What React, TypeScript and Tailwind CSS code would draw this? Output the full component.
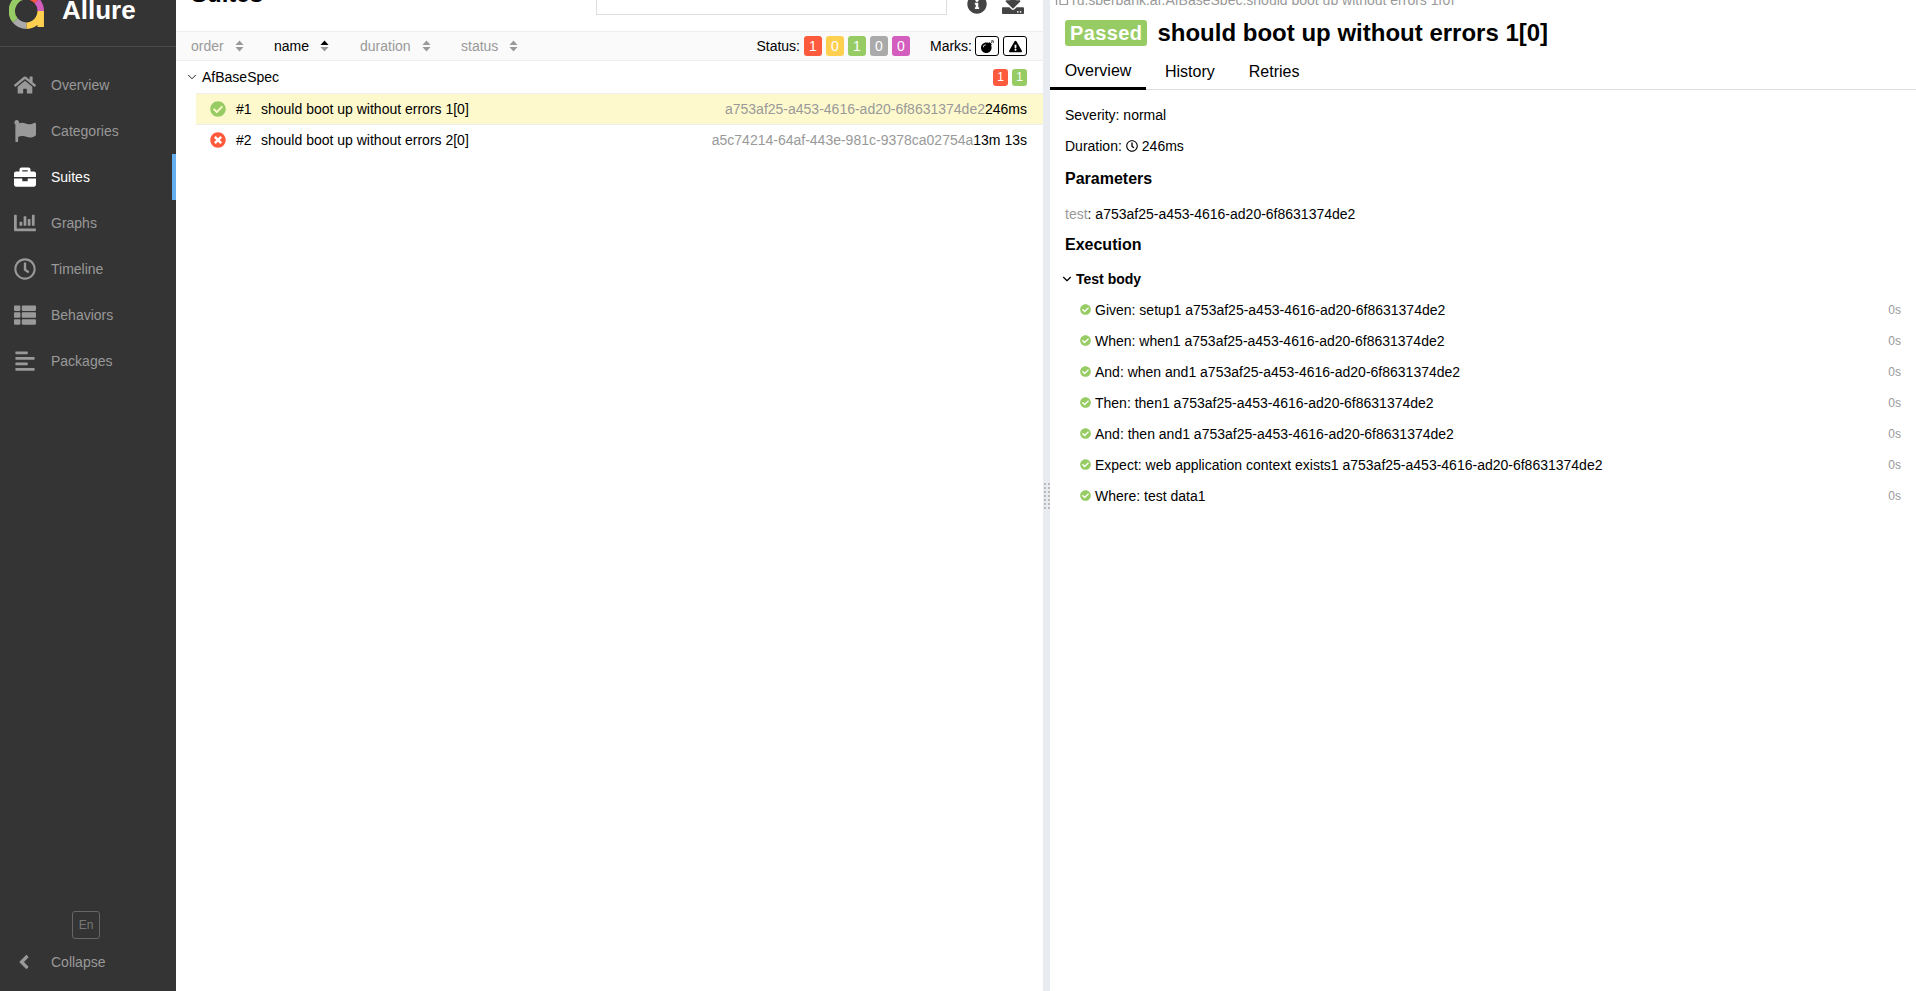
import {
  FaAlignLeft,
  FaAngleLeft,
  FaBomb,
  FaBriefcase,
  FaChartBar,
  FaCheckCircle,
  FaDownload,
  FaExclamationTriangle,
  FaFlag,
  FaHome,
  FaInfoCircle,
  FaRegClock,
  FaRegCopy,
  FaThList,
  FaTimesCircle,
} from "react-icons/fa";
import { ChevronDown } from "lucide-react";

const uid = "a753af25-a453-4616-ad20-6f8631374de2";

const navItems = [
  { label: "Overview", icon: FaHome },
  { label: "Categories", icon: FaFlag },
  { label: "Suites", icon: FaBriefcase, active: true },
  { label: "Graphs", icon: FaChartBar },
  { label: "Timeline", icon: FaRegClock },
  { label: "Behaviors", icon: FaThList },
  { label: "Packages", icon: FaAlignLeft },
];

const columns = [
  { label: "order", width: "w-[83px]" },
  { label: "name", width: "w-[86px]", active: true },
  { label: "duration", width: "w-[101px]" },
  { label: "status", width: "w-[70px]" },
];

const statusCounts = [
  { value: 1, color: "bg-[#fd5a3e]" },
  { value: 0, color: "bg-[#ffd050]" },
  { value: 1, color: "bg-[#97cc64]" },
  { value: 0, color: "bg-[#aaaaaa]" },
  { value: 0, color: "bg-[#d35ebe]" },
];

const steps = [
  `Given: setup1 ${uid}`,
  `When: when1 ${uid}`,
  `And: when and1 ${uid}`,
  `Then: then1 ${uid}`,
  `And: then and1 ${uid}`,
  `Expect: web application context exists1 ${uid}`,
  "Where: test data1",
];

function Logo() {
  return (
    <svg width="36" height="36" viewBox="0 0 36 36" className="mt-[-7px] ml-[9px] shrink-0">
      <g fill="none" strokeWidth="6.5">
        <path d="M17.5 3.3 A14.7 14.7 0 0 0 6.2 27.4" stroke="#97cc64" />
        <path d="M6.2 27.4 A14.7 14.7 0 0 0 17.5 32.7" stroke="#aaaaaa" />
        <path d="M17.5 32.7 A14.7 14.7 0 0 0 31.7 18 L31.7 34" stroke="#ffd050" />
        <path d="M31.7 18 A14.7 14.7 0 0 0 27.8 7.8" stroke="#d35ebe" />
        <path d="M27.8 7.8 A14.7 14.7 0 0 0 17.5 3.3" stroke="#fd5a3e" />
      </g>
    </svg>
  );
}

function SortIcon({ active }: { active?: boolean }) {
  return (
    <svg width="9" height="12" viewBox="0 0 9 12" className="ml-[11px] shrink-0">
      <path d="M4.5 0.5 L8.5 5 H0.5 Z" fill={active ? "#000000" : "#999999"} />
      <path d="M0.5 7 H8.5 L4.5 11.5 Z" fill="#999999" />
    </svg>
  );
}

function Sidebar() {
  return (
    <aside className="flex h-full w-[176px] shrink-0 flex-col bg-[#343434]">
      <div className="flex h-[47px] shrink-0 items-start overflow-hidden border-b border-[#4a4a4a]">
        <Logo />
        <span className="ml-[17px] mt-[-5px] text-[26px] font-bold leading-[30px] text-white">Allure</span>
      </div>
      <nav className="flex flex-col pt-[15px]">
        {navItems.map((item) => {
          const Icon = item.icon;
          return (
            <div
              key={item.label}
              className={`flex h-[46px] items-center border-r-4 pl-[14px] ${
                item.active ? "border-[#64aef0] text-white" : "border-transparent text-[#999999]"
              }`}
            >
              <span className="flex w-[37px] shrink-0">
                <Icon size={22} />
              </span>
              <span className="text-sm">{item.label}</span>
            </div>
          );
        })}
      </nav>
      <div className="mt-auto flex flex-col pb-[19px]">
        <div className="mb-[13px] flex justify-center pr-[4px]">
          <span className="flex h-[28px] w-[28px] items-center justify-center rounded-[3px] border border-[#666666] text-xs text-[#777777]">
            En
          </span>
        </div>
        <div className="flex h-[20px] items-center pl-[14px] text-[#999999]">
          <span className="flex w-[37px] shrink-0">
            <FaAngleLeft size={22} className="ml-[-1px]" />
          </span>
          <span className="text-sm">Collapse</span>
        </div>
      </div>
    </aside>
  );
}

function TestRow({ n, name, id, time, ok, selected }: { n: number; name: string; id: string; time: string; ok?: boolean; selected?: boolean }) {
  return (
    <div className={`ml-[20px] flex h-[31px] items-center border-b pl-[14px] pr-[16px] text-sm ${selected ? "border-[#eeeeee] bg-[#fef9cd]" : "border-transparent"}`}>
      {ok ? <FaCheckCircle size={16} className="text-[#97cc64]" /> : <FaTimesCircle size={16} className="text-[#fd5a3e]" />}
      <span className="ml-[10px] w-[25px]">#{n}</span>
      <span>{name}</span>
      <span className="ml-auto text-[#999999]">{id}</span>
      <span>{time}</span>
    </div>
  );
}

function SuitesPane() {
  return (
    <section className="flex h-full w-[867px] shrink-0 flex-col">
      <div className="flex h-[31px] shrink-0 items-start overflow-hidden pl-[15px]">
        <h2 className="mt-[-22px] text-2xl font-bold leading-[32px]">Suites</h2>
        <div className="ml-[333px] mt-[-1px] h-[16px] w-[351px] border border-[#dddddd] bg-white" />
        <FaInfoCircle size={20} className="ml-[20px] mt-[-6px] text-[#444444]" />
        <FaDownload size={22} className="ml-[15px] mt-[-8px] text-[#444444]" />
      </div>
      <div className="flex h-[30px] shrink-0 items-center border-y border-[#eeeeee] bg-[#fafafa] pl-[15px] pr-[16px] text-sm">
        {columns.map((col) => (
          <span key={col.label} className={`flex items-center ${col.width} ${col.active ? "text-black" : "text-[#999999]"}`}>
            {col.label}
            <SortIcon active={col.active} />
          </span>
        ))}
        <span className="ml-auto">Status:</span>
        <div className="ml-[4px] flex gap-[4px]">
          {statusCounts.map((item, i) => (
            <span key={i} className={`flex h-[20px] w-[18px] items-center justify-center rounded-[3px] text-white ${item.color}`}>
              {item.value}
            </span>
          ))}
        </div>
        <span className="ml-[20px]">Marks:</span>
        <div className="ml-[3px] flex gap-[4px]">
          <span className="flex h-[20px] w-[24px] items-center justify-center rounded-[3px] border border-black bg-white">
            <FaBomb size={13} />
          </span>
          <span className="flex h-[20px] w-[24px] items-center justify-center rounded-[3px] border border-black bg-white">
            <FaExclamationTriangle size={13} />
          </span>
        </div>
      </div>
      <div className="flex h-[32px] shrink-0 items-center pl-[9px] pr-[16px] text-sm">
        <ChevronDown size={14} strokeWidth={1.5} className="mr-[2px]" />
        <span className="ml-[1px]">AfBaseSpec</span>
        <div className="ml-auto flex gap-[4px] text-xs text-white">
          <span className="flex h-[17px] w-[15px] items-center justify-center rounded-[3px] bg-[#fd5a3e]">1</span>
          <span className="flex h-[17px] w-[15px] items-center justify-center rounded-[3px] bg-[#97cc64]">1</span>
        </div>
      </div>
      <div className="border-t border-[#eeeeee] ml-[20px]" />
      <TestRow n={1} name="should boot up without errors 1[0]" id={uid} time="246ms" ok selected />
      <TestRow n={2} name="should boot up without errors 2[0]" id="a5c74214-64af-443e-981c-9378ca02754a" time="13m 13s" />
    </section>
  );
}

function Splitter() {
  return (
    <div className="flex h-full w-[7px] shrink-0 flex-col items-center justify-center bg-[#e8ecf0]">
      <div className="grid grid-cols-2 gap-[2px]">
        {Array.from({ length: 14 }).map((_, i) => (
          <span key={i} className="h-[2px] w-[2px] bg-[#bbbbbb]" />
        ))}
      </div>
    </div>
  );
}

function DetailPane() {
  return (
    <section className="flex h-full min-w-0 flex-1 flex-col text-sm">
      <div className="flex h-[5px] shrink-0 items-end overflow-hidden pl-[5px] text-[#999999]">
        <FaRegCopy size={14} className="mb-[-3px] shrink-0" />
        <span className="mb-[-3px] ml-[3px] whitespace-nowrap leading-[16px]">ru.sberbank.af.AfBaseSpec.should boot up without errors 1[0]</span>
      </div>
      <div className="mt-[15px] flex h-[26px] shrink-0 items-center pl-[15px]">
        <span className="rounded-[3px] bg-[#97cc64] px-[5px] text-xl font-bold leading-[26px] tracking-[0.4px] text-white">Passed</span>
        <h1 className="ml-[10px] text-2xl font-bold">should boot up without errors 1[0]</h1>
      </div>
      <div className="mt-[8px] flex h-[36px] shrink-0 border-b border-[#dddddd] text-base">
        <span className="mb-[-1px] flex w-[96px] items-center justify-center border-b-[3px] border-black">Overview</span>
        <span className="ml-[19px] flex items-center">History</span>
        <span className="ml-[34px] flex items-center">Retries</span>
      </div>
      <div className="flex flex-col pl-[15px] pr-[15px]">
        <div className="mt-[16px] leading-[18px]">Severity: normal</div>
        <div className="mt-[13px] flex items-center leading-[18px]">
          Duration:
          <FaRegClock size={12} className="ml-[4px] mr-[4px]" />
          246ms
        </div>
        <h3 className="mt-[14px] text-base font-bold leading-[20px]">Parameters</h3>
        <div className="mt-[15px] leading-[20px]">
          <span className="text-[#999999]">test</span>: {uid}
        </div>
        <h3 className="mt-[11px] text-base font-bold leading-[20px]">Execution</h3>
        <div className="ml-[-5px] mt-[15px] flex items-center font-bold leading-[18px]">
          <ChevronDown size={14} strokeWidth={2} className="mr-[2px]" />
          Test body
        </div>
        <div className="mt-[6px] flex flex-col">
          {steps.map((step) => (
            <div key={step} className="flex h-[31px] items-center pl-[15px]">
              <FaCheckCircle size={11} className="shrink-0 text-[#97cc64]" />
              <span className="ml-[4px]">{step}</span>
              <span className="ml-auto text-xs text-[#999999]">0s</span>
            </div>
          ))}
        </div>
      </div>
    </section>
  );
}

export default function App() {
  return (
    <div className="flex h-[991px] w-full overflow-hidden bg-white font-['Liberation_Sans',Arial,sans-serif] text-black">
      <Sidebar />
      <SuitesPane />
      <Splitter />
      <DetailPane />
    </div>
  );
}
